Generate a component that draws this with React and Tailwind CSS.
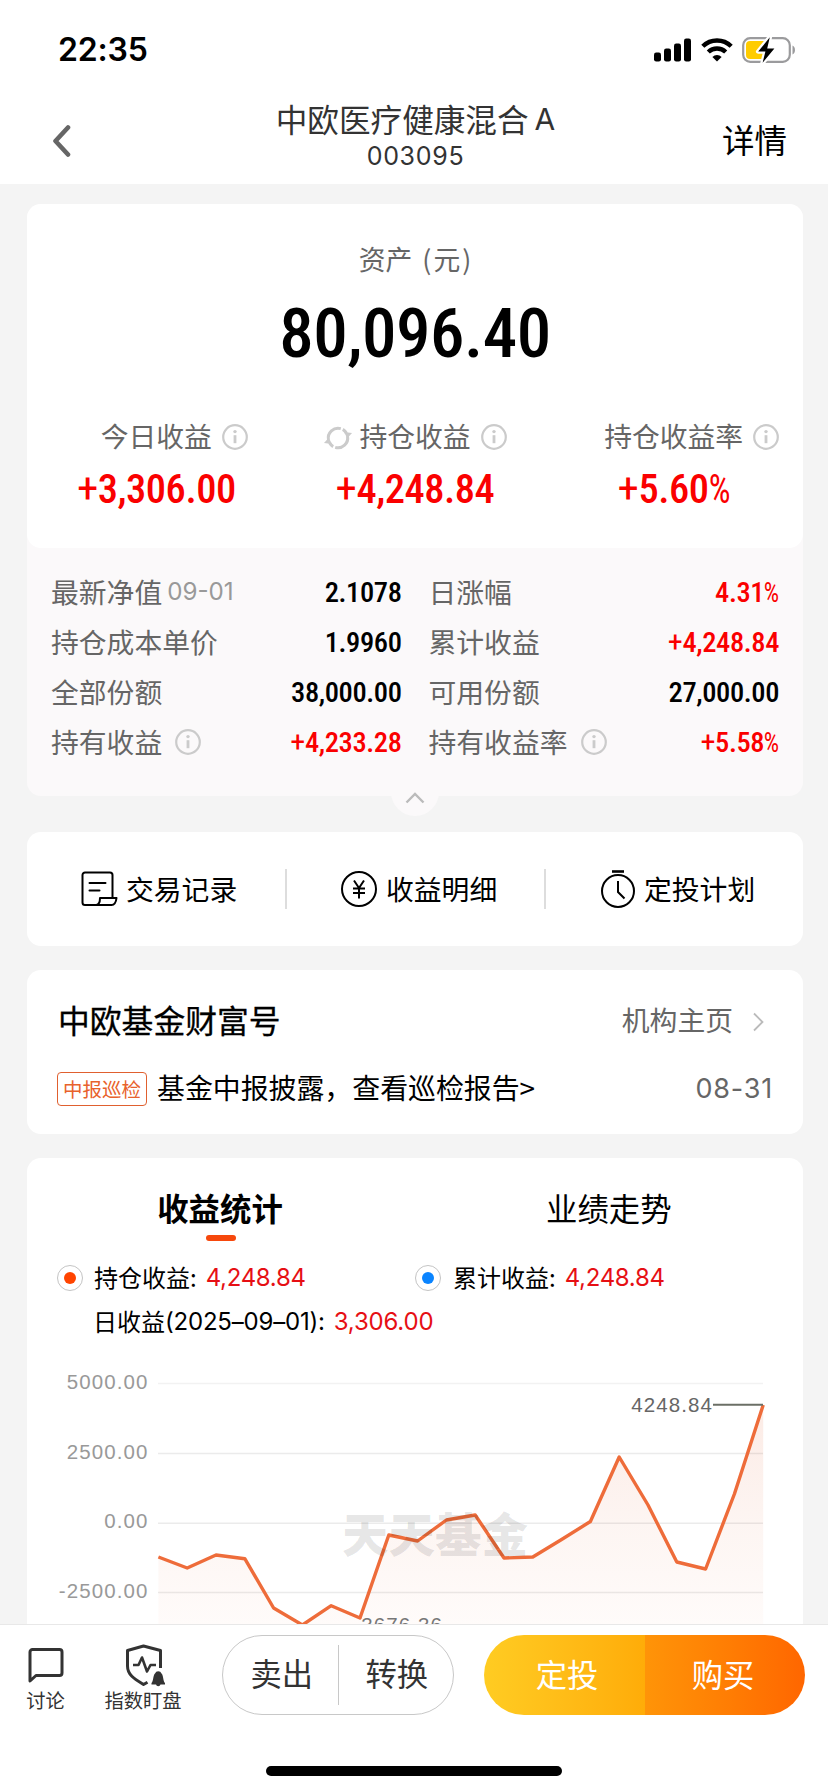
const NUM = "font-['Roboto','Noto_Sans_CJK_SC',sans-serif] font-medium [font-stretch:75%]";
const LAT = "font-['Inter','Noto_Sans_CJK_SC',sans-serif]";

function Info() {
  return (
    <svg className="h-[26px] w-[26px] shrink-0" viewBox="0 0 26 26" fill="none" stroke="#cbcbcb" strokeWidth="2.2">
      <circle cx="13" cy="13" r="11.800" />
      <path d="M13 11.2v8" strokeWidth="2.800" />
      <circle cx="13" cy="7.600" r="1.700" fill="#cbcbcb" stroke="none" />
    </svg>
  );
}

function Refresh() {
  return (
    <svg className="ml-px mt-px h-[26px] w-[28px] shrink-0" viewBox="0 0 28 26" fill="none" stroke="#cbcbcb" strokeWidth="3">
      <path d="M4.500 15A9.800 9.800 0 0 1 16.800 3.600" />
      <path d="M23.500 11A9.800 9.800 0 0 1 11.200 22.400" />
      <path d="M18.800 4.400A9.800 9.800 0 0 1 22.500 8.200" />
      <path d="M9.200 21.600A9.800 9.800 0 0 1 5.500 17.800" />
      <path d="M28 8L23.300 13.200 20 7z" fill="#cbcbcb" stroke="none" />
      <path d="M0 18L4.700 12.800 8 19z" fill="#cbcbcb" stroke="none" />
    </svg>
  );
}

function Amount({ value }) {
  const plus = value.startsWith("+");
  const percent = value.endsWith("%");
  const digits = value.slice(plus ? 1 : 0, percent ? -1 : undefined);
  return (
    <>
      {plus && <span className="text-[1.06em] font-normal leading-none">+</span>}
      {digits}
      {percent && <span className="-ml-[0.1em] inline-block origin-right scale-x-[0.85] font-normal">%</span>}
    </>
  );
}

function Stat({ label, value, refresh }) {
  return (
    <div className="flex w-1/3 flex-col items-center">
      <div className="flex h-[40px] items-center">
        <div className="w-[36px] shrink-0">{refresh && <Refresh />}</div>
        <span className="whitespace-nowrap pb-[2px] text-[27.800px] text-[#666]">{label}</span>
        <div className="flex w-[36px] shrink-0 justify-end"><Info /></div>
      </div>
      <div className={`${NUM} mt-[7px] h-[50px] text-[40.500px] leading-[50px] tracking-[-0.012em] text-[#fa0000]`}><Amount value={value} /></div>
    </div>
  );
}

function Row({ label, date, info, value, red }) {
  return (
    <div className="flex h-[50px] items-center justify-between whitespace-nowrap">
      <div className="flex items-center text-[27.800px] text-[#666]">
        <span className="pb-px">{label}</span>
        {date && <span className={`${LAT} ml-[5px] text-[24.200px] text-[#999]`}>{date}</span>}
        {info && <span className="ml-[13px]"><Info /></span>}
      </div>
      <span className={`${NUM} mt-px text-[28.500px] leading-[40px] tracking-[-0.014em] ${red ? "text-[#fa0000]" : "text-black"}`}><Amount value={value} /></span>
    </div>
  );
}

function Dot({ blue }) {
  return (
    <span className="flex h-[26px] w-[26px] shrink-0 items-center justify-center rounded-full border border-[#c4c4c4]">
      <span className={`h-[12px] w-[12px] rounded-full ${blue ? "bg-[#0a84ff]" : "bg-[#ff4400]"}`} />
    </span>
  );
}

const series = [1557, 1568, 1555, 1558.7, 1608, 1625, 1605.7, 1618, 1535, 1541, 1520, 1515, 1558, 1557, 1539.5, 1521.5, 1457, 1505, 1562, 1569, 1494, 1405];
const line = series.map((y, i) => `${(131.4 + i * 28.8).toFixed(1)},${(y - 1350).toFixed(1)}`).join(" ");

function Chart() {
  return (
    <svg className="block h-[274px] w-[776px]" viewBox="0 0 776 274">
      <defs>
        <linearGradient id="area" x1="0" y1="55" x2="0" y2="290" gradientUnits="userSpaceOnUse">
          <stop offset="0" stopColor="#fcebe5" />
          <stop offset="0.5" stopColor="#fdf5f2" />
          <stop offset="1" stopColor="#fffcfb" />
        </linearGradient>
      </defs>
      <polygon points={`131.4,274 ${line} 736.2,274`} fill="url(#area)" />
      <g stroke="#000" strokeOpacity="0.08" strokeWidth="1.4">
        <path d="M131 33.5H736" strokeOpacity="0.05" />
        <path d="M131 103.5H736M131 173.3H736M131 242.5H736" />
      </g>
      <polyline points={line} fill="none" stroke="#ee6c3a" strokeWidth="3.4" strokeLinejoin="round" />
      <text x="315" y="201.500" fontSize="46.500" fontWeight="900" fill="#000" fillOpacity="0.1" fontFamily="Noto Sans CJK SC">天天基金</text>
      <path d="M686 54.7H736" stroke="#6b6f66" strokeWidth="2" />
      <g fontFamily="Liberation Sans" fontSize="20.500" letterSpacing="1.1" fill="#999" textAnchor="end">
        <text x="121.500" y="39">5000.00</text>
        <text x="121.500" y="109">2500.00</text>
        <text x="121.500" y="178">0.00</text>
        <text x="121.500" y="248">-2500.00</text>
        <text x="686" y="62" fill="#666">4248.84</text>
        <text x="416" y="282" fill="#777">3676.36</text>
      </g>
    </svg>
  );
}

export default function App() {
  return (
    <div className="flex h-[1792px] w-[828px] flex-col overflow-hidden bg-[#f4f4f4] font-['Noto_Sans_CJK_SC',sans-serif] text-black">
      <header className="h-[184px] shrink-0 bg-white">
        <div className="flex h-[98px] items-center justify-between pl-[58px] pr-[32px] pt-[2px]">
          <span className={`${LAT} text-[32px] font-semibold tracking-[-0.200px]`}>22:35</span>
          <div className="flex items-center">
            <svg className="h-[24px] w-[38px]" viewBox="0 0 38 24">
              <rect x="0" y="14.5" width="7" height="9" rx="2.2" />
              <rect x="10" y="10.5" width="7" height="13" rx="2.2" />
              <rect x="20" y="5.5" width="7" height="18" rx="2.2" />
              <rect x="30" y="0.5" width="7" height="23" rx="2.2" />
            </svg>
            <svg className="ml-[9px] h-[24px] w-[32px]" viewBox="0 0 32 24" fill="none" stroke="#000" strokeWidth="4.4">
              <path d="M1.8 8.3a20.3 20.3 0 0 1 28.4 0" />
              <path d="M7.3 14a12.5 12.5 0 0 1 17.4 0" />
              <path d="M16 23.5l-4.6-4.6a6.6 6.6 0 0 1 9.2 0z" fill="#000" stroke="none" />
            </svg>
            <svg className="ml-[9px] h-[28px] w-[54px]" viewBox="0 0 54 28">
              <rect x="1.2" y="2.2" width="46.6" height="23.6" rx="7" fill="none" stroke="#9b9b9d" strokeWidth="2.2" />
              <path d="M50.5 9.5c3.3 1.2 3.3 7.8 0 9z" fill="#9b9b9d" />
              <rect x="4" y="5" width="22" height="18" rx="4" fill="#ffcc00" />
              <path d="M27.8 1.2L16.2 15.6h7.2L20.6 26.8 32.4 12.4h-7.2z" fill="#000" stroke="#fff" strokeWidth="4.5" paintOrder="stroke" strokeLinejoin="round" />
            </svg>
          </div>
        </div>
        <div className="flex h-[86px] items-center justify-between pl-[50px] pr-[41px]">
          <svg className="h-[32px] w-[94px]" viewBox="0 0 94 32" fill="none" stroke="#666" strokeWidth="4.6" strokeLinecap="round" strokeLinejoin="round">
            <path d="M18 2.5L5.500 16 18 29.5" />
          </svg>
          <div className="flex flex-col items-center pb-[13px] pr-[2px] text-[#333]">
            <div className="flex h-[42px] items-center whitespace-nowrap text-[31.600px]"><span className="pb-px">中欧医疗健康混合</span><span className={`${LAT} ml-[6px] text-[30px]`}>A</span></div>
            <div className={`${LAT} h-[30px] text-[25px] leading-[31px] tracking-[0.700px]`}>003095</div>
          </div>
          <span className="flex w-[98px] justify-end whitespace-nowrap pb-[4px] text-[32.500px]">详情</span>
        </div>
      </header>

      <section className="relative ml-[27px] mr-[25px] mt-[20px] h-[592px] shrink-0 rounded-[14px] bg-[#fbf9fa]">
        <div className="flex h-[344px] flex-col items-center rounded-[14px] bg-white pt-[35px]">
          <div className="h-[40px] whitespace-nowrap text-[26.800px] leading-[40px] text-[#666]">资产<span className="ml-[10px]">(</span><span className="mx-[2px]">元</span>)</div>
          <div className={`${NUM} mt-[15px] h-[80px] text-[69px] leading-[80px] tracking-[-0.007em]`}>80,096.40</div>
          <div className="mt-[43px] flex w-full">
            <Stat label="今日收益" value="+3,306.00" />
            <Stat label="持仓收益" value="+4,248.84" refresh />
            <Stat label="持仓收益率" value="+5.60%" />
          </div>
        </div>
        <div className="grid grid-cols-2 gap-x-[27px] pl-[24px] pr-[24px] pt-[19px]">
          <Row label="最新净值" date="09-01" value="2.1078" />
          <Row label="日涨幅" value="4.31%" red />
          <Row label="持仓成本单价" value="1.9960" />
          <Row label="累计收益" value="+4,248.84" red />
          <Row label="全部份额" value="38,000.00" />
          <Row label="可用份额" value="27,000.00" />
          <Row label="持有收益" info value="+4,233.28" red />
          <Row label="持有收益率" info value="+5.58%" red />
        </div>
        <div className="absolute bottom-[-20px] left-[364px] flex h-[48px] w-[48px] items-center justify-center rounded-full bg-[#fbf9fa]">
          <svg className="mt-[12px] h-[12px] w-[20px]" viewBox="0 0 20 12" fill="none" stroke="#bbb" strokeWidth="2.4"><path d="M1.5 10.5L10 2l8.500 8.500" /></svg>
        </div>
      </section>

      <section className="ml-[27px] mr-[25px] mt-[36px] flex h-[114px] shrink-0 items-center rounded-[14px] bg-white text-[27.800px]">
        <div className="flex h-[40px] w-[258px] items-center whitespace-nowrap pl-[54px]">
          <svg className="mr-[8px] h-[36px] w-[37px]" viewBox="0 0 37 36" fill="none" stroke="#000" strokeWidth="2" strokeLinejoin="round" strokeLinecap="round">
            <path d="M31.500 27V4a2.500 2.500 0 0 0-2.500-2.500H4A2.500 2.500 0 0 0 1.500 4v27.500A2.500 2.500 0 0 0 4 34H30.500c3 0 4.500-2.500 5-7H19c0 4-1.500 7-4.500 7" />
            <path d="M8.500 12h16M8.500 19.500h10" />
          </svg>
          <span className="pb-px">交易记录</span>
        </div>
        <div className="h-[40px] w-[2px] bg-[#ddd]" />
        <div className="flex h-[40px] w-[257px] items-center whitespace-nowrap pl-[53px]">
          <svg className="mr-[8px] h-[38px] w-[38px]" viewBox="0 0 38 38" fill="none" stroke="#000" strokeWidth="2">
            <circle cx="19" cy="19" r="17" />
            <path d="M14 10.500l5 7.500 5-7.500M19 18v10.500M13 18.500h12M13 23h12" />
          </svg>
          <span className="pb-px">收益明细</span>
        </div>
        <div className="h-[40px] w-[2px] bg-[#ddd]" />
        <div className="flex h-[40px] items-center whitespace-nowrap pl-[54px]">
          <svg className="mr-[8px] h-[40px] w-[36px]" viewBox="0 0 36 40" fill="none" stroke="#000" strokeWidth="2">
            <circle cx="18" cy="22" r="16" />
            <path d="M12 2.500h12" strokeWidth="2.600" />
            <path d="M18 12v11l6.500 6.500" />
          </svg>
          <span className="pb-px">定投计划</span>
        </div>
      </section>

      <section className="ml-[27px] mr-[25px] mt-[24px] h-[164px] shrink-0 rounded-[14px] bg-white pl-[30px] pr-[30px] pt-[25px]">
        <div className="flex h-[50px] items-center justify-between whitespace-nowrap">
          <span className="pl-[1px] text-[31.800px] [-webkit-text-stroke:0.3px_#000]">中欧基金财富号</span>
          <span className="flex items-center pr-[9px] text-[27.800px] text-[#666]">
            机构主页
            <svg className="ml-[19px] mt-[3px] h-[20px] w-[12px]" viewBox="0 0 12 20" fill="none" stroke="#bbb" strokeWidth="1.8"><path d="M2 1.500L10.500 10 2 18.500" /></svg>
          </span>
        </div>
        <div className="mt-[19px] flex h-[50px] items-center whitespace-nowrap">
          <span className="flex h-[34px] w-[90px] items-center justify-center rounded-[4px] border-[1.5px] border-[#e0602f] text-[19.500px] text-[#e8622c]">中报巡检</span>
          <span className="ml-[10px] pb-[2px] text-[27.900px]">基金中报披露，查看巡检报告&gt;</span>
          <span className={`${LAT} ml-auto text-[27px] tracking-[0.800px] text-[#666]`}>08-31</span>
        </div>
      </section>

      <section className="ml-[27px] mr-[25px] mt-[24px] h-[466px] shrink-0 overflow-hidden rounded-t-[14px] bg-white">
        <div className="flex h-[77px] pt-[25px] text-[31.400px] leading-[50px]">
          <div className="flex w-[386px] flex-col items-center">
            <span className="font-bold">收益统计</span>
            <span className="ml-[2px] mt-[2px] h-[6px] w-[30px] shrink-0 rounded-[3px] bg-[#f6480c]" />
          </div>
          <div className="w-[388px] pl-[133px]"><div className="w-[126px] whitespace-nowrap">业绩走势</div></div>
        </div>
        <div className="mt-[21px] flex h-[44px] items-center pl-[30px] text-[24px]">
          <div className="flex w-[358px] items-center whitespace-nowrap">
            <Dot /><span className="ml-[11px] pb-[2px]">持仓收益:</span><span className={`${LAT} ml-[9px] tracking-[-0.300px] text-[#e60f14]`}>4,248.84</span>
          </div>
          <div className="flex items-center whitespace-nowrap">
            <Dot blue /><span className="ml-[12px] pb-[2px]">累计收益:</span><span className={`${LAT} ml-[9px] tracking-[-0.300px] text-[#e60f14]`}>4,248.84</span>
          </div>
        </div>
        <div className="flex h-[44px] items-center whitespace-nowrap pl-[66px] text-[24px]">
          <span className="pb-[2px]">日收益</span><span className={`${LAT} tracking-[-0.200px]`}>(2025–09–01):</span><span className={`${LAT} ml-[9px] tracking-[-0.200px] text-[#e60f14]`}>3,306.00</span>
        </div>
        <div className="mt-[6px]"><Chart /></div>
      </section>

      <footer className="flex h-[168px] shrink-0 flex-col border-t border-[#e8e8e8] bg-white text-[#333]">
        <div className="flex h-[102px] items-start pt-[10px]">
          <div className="ml-[20px] flex w-[51px] flex-col items-center whitespace-nowrap pt-[13px] text-[19.300px]">
            <svg className="h-[36px] w-[36px]" viewBox="0 0 36 36" fill="none" stroke="#333" strokeWidth="3" strokeLinejoin="round">
              <path d="M2 33V4a2.500 2.500 0 0 1 2.500-2.500h27A2.500 2.500 0 0 1 34 4v21a2.500 2.500 0 0 1-2.500 2.500H8z" />
            </svg>
            <span className="mt-[1px] leading-[30px]">讨论</span>
          </div>
          <div className="ml-[33px] flex w-[78px] flex-col items-center whitespace-nowrap pt-[9px] text-[19.300px]">
            <svg className="ml-[3px] h-[44px] w-[40px]" viewBox="0 0 40 44" fill="none" stroke="#333" strokeWidth="3" strokeLinejoin="round">
              <path d="M35.500 24V6.500L18.500 2 2.500 6.500V22c0 9 7 13 16 18.500l4-2.300" />
              <path d="M8 21h5.500l3.500-7.500 5 14 3.500-6.500H31" strokeWidth="2.600" />
              <path d="M26.500 40.500v-1.500c2-1.500 1.500-8 3.500-9.500a3.500 3.500 0 0 1 6.500 0c2 1.500 1.500 8 3.500 9.500v1.500h-4.500a2.300 2.300 0 0 1-4.500 0z" fill="#333" stroke="none" />
            </svg>
            <span className="mt-[-3px] leading-[30px]">指数盯盘</span>
          </div>
          <div className="ml-[40px] flex h-[80px] w-[232px] items-center rounded-full border border-[#c8c8c8] text-[31.300px]">
            <span className="w-[115px] pb-[3px] pl-[3px] text-center">卖出</span>
            <span className="h-[60px] w-px bg-[#c8c8c8]" />
            <span className="w-[115px] pb-[3px] pl-[2px] text-center">转换</span>
          </div>
          <div className="ml-[30px] flex h-[80px] w-[321px] items-center overflow-hidden rounded-full text-[31.300px] leading-[77px] text-white">
            <span className="w-[161px] bg-linear-to-r from-[#ffcc22] to-[#ffac08] pb-[3px] pl-[5px] text-center">定投</span>
            <span className="w-[160px] bg-linear-to-r from-[#ff9408] to-[#ff6600] pb-[3px] pr-[4px] text-center">购买</span>
          </div>
        </div>
        <div className="mx-auto mt-[39px] h-[10px] w-[296px] rounded-full bg-black" />
      </footer>
    </div>
  );
}
